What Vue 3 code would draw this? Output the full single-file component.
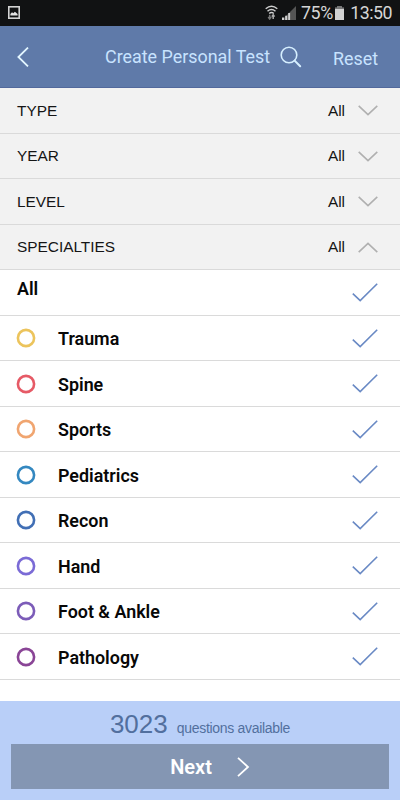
<script setup>
const filters = [
  { name: 'TYPE', value: 'All', open: false },
  { name: 'YEAR', value: 'All', open: false },
  { name: 'LEVEL', value: 'All', open: false },
  { name: 'SPECIALTIES', value: 'All', open: true },
]
const specialties = [
  { name: 'Trauma', color: '#ecc45c' },
  { name: 'Spine', color: '#e65a66' },
  { name: 'Sports', color: '#f0a570' },
  { name: 'Pediatrics', color: '#3488c0' },
  { name: 'Recon', color: '#416fb5' },
  { name: 'Hand', color: '#7b6bd6' },
  { name: 'Foot & Ankle', color: '#7c5cb8' },
  { name: 'Pathology', color: '#8a4596' },
]
</script>

<template>
  <div class="screen">
    <div class="status">
      <svg class="picture" width="12" height="13" viewBox="0 0 12 13">
        <rect x="0.8" y="0.8" width="10.4" height="11.4" fill="none" stroke="#d4d4d4" stroke-width="1.6" />
        <path d="M2.4 9.5V8l1.6-1.7 1.3 1 1.6-1.5L9.6 8v1.5z" fill="#e4e4e4" />
      </svg>
      <svg class="wifi" width="13" height="15" viewBox="0 0 13 15" fill="none" stroke="#cfcfcf" stroke-width="1.5">
        <path d="M.7 3.7Q6.5-1.2 12.3 3.7M2.5 6.2Q6.5 2.8 10.5 6.2M4.2 8.5Q6.5 6.5 8.8 8.5" />
        <path d="M4.7 14V9.8M3.2 12l1.5 2 1.5-2" stroke="#777" />
        <path d="M8.2 14V9.8M6.8 11.6l1.4-1.8 1.4 1.8" stroke="#aaa" />
      </svg>
      <svg class="signal" width="14" height="14" viewBox="0 0 14 14">
        <path d="M0 14L14 0V14z" fill="#555" />
        <path d="M0 14v-2.5h2V14zM3.2 14V9.7h2V14zM6.2 14V7h1.9v7z" fill="#d0d0d0" />
      </svg>
      <span class="percent">75%</span>
      <svg class="battery" width="9" height="14" viewBox="0 0 9 14">
        <path d="M2.5 0h4v1.7H9V14H0V1.7h2.5z" fill="#d2d2d2" />
        <path d="M2.5 0h4v1.7H9v1.4H0V1.7h2.5z" fill="#777" />
      </svg>
      <span class="clock">13:50</span>
    </div>

    <header class="header">
      <svg class="back" width="12" height="20" viewBox="0 0 12 20">
        <path d="M11 .6L1.4 10l9.6 9.4" fill="none" stroke="#e3f6ff" stroke-width="1.8" />
      </svg>
      <span class="title">Create Personal Test</span>
      <svg class="search" width="22" height="22" viewBox="0 0 22 22" fill="none" stroke="#d6efff">
        <circle cx="9" cy="9" r="7.8" stroke-width="1.6" />
        <path d="M14.6 14.6l5.6 5.7" stroke-width="2" stroke-linecap="round" />
      </svg>
      <span class="reset">Reset</span>
    </header>

    <div v-for="f in filters" :key="f.name" class="row filter">
      <span class="filter-name">{{ f.name }}</span>
      <span class="filter-value">{{ f.value }}</span>
      <svg :class="['chevron', { open: f.open }]" width="20" height="11" viewBox="0 0 20 11">
        <path d="M.7.9L10 9.7 19.3.9" fill="none" stroke="#b0b0b0" stroke-width="1.6" />
      </svg>
    </div>

    <div class="row item all">
      <span class="all-name">All</span>
      <svg class="check" width="26" height="19" viewBox="0 0 26 19">
        <path d="M.8 10.6l7.4 7L25.2.8" fill="none" stroke="#6989c4" stroke-width="1.6" />
      </svg>
    </div>
    <div v-for="s in specialties" :key="s.name" class="row item specialty">
      <svg class="ring" width="20" height="20" viewBox="0 0 20 20">
        <circle cx="10" cy="10" r="8.1" fill="none" :stroke="s.color" stroke-width="2.6" />
      </svg>
      <span class="name">{{ s.name }}</span>
      <svg class="check" width="26" height="19" viewBox="0 0 26 19">
        <path d="M.8 10.6l7.4 7L25.2.8" fill="none" stroke="#6989c4" stroke-width="1.6" />
      </svg>
    </div>

    <footer class="footer">
      <div class="count">
        <span class="number">3023</span>
        <span class="available">questions available</span>
      </div>
      <div class="next">
        <span>Next</span>
        <svg width="13" height="20" viewBox="0 0 13 20">
          <path d="M1 .8l10 9.2L1 19.2" fill="none" stroke="#fff" stroke-width="1.8" />
        </svg>
      </div>
    </footer>
  </div>
</template>

<style>
body {
  margin: 0;
  background: #fff;
}
</style>

<style scoped>
.screen {
  width: 400px;
  height: 800px;
  display: flex;
  flex-direction: column;
  overflow: hidden;
  background: #fff;
  font-family: Roboto, sans-serif;
  white-space: nowrap;
}
svg {
  display: block;
  flex: none;
}
.status {
  height: 26px;
  flex: none;
  box-sizing: border-box;
  padding: 0 8px;
  display: flex;
  align-items: center;
  background: #111213;
  color: #d6d6d6;
  line-height: 26px;
}
.picture {
  margin-top: -2px;
}
.wifi {
  margin-left: 245px;
  margin-top: -1px;
}
.signal {
  margin-left: 4px;
}
.percent {
  width: 34px;
  margin-left: 5px;
  font-size: 17.8px;
  letter-spacing: -0.4px;
}
.battery {
  margin-left: 1px;
}
.clock {
  margin-left: 6px;
  font-size: 17.8px;
  letter-spacing: -0.5px;
}
.header {
  height: 62px;
  flex: none;
  box-sizing: border-box;
  padding: 0 17px;
  border-bottom: 1px solid #52699c;
  display: flex;
  align-items: center;
  background: #5f7aa9;
  color: #c8e3ff;
  font-size: 17.9px;
}
.title {
  width: 165px;
  margin-left: 76px;
}
.search {
  margin-left: 10px;
}
.reset {
  margin-left: 31px;
  padding-top: 3px;
}
.row {
  height: 45.5px;
  flex: none;
  box-sizing: border-box;
  padding: 0 22px 0 17px;
  border-bottom: 1px solid #dadada;
  display: flex;
  align-items: center;
}
.filter {
  padding-top: 1px;
  background: #f2f2f2;
  color: #151515;
  font-family: "Liberation Sans", sans-serif;
  font-size: 15.4px;
}
.filter-name {
  flex: 1;
}
.filter-value {
  margin-right: 13px;
}
.chevron.open {
  transform: rotate(180deg);
}
.item {
  color: #080808;
  font-size: 17.9px;
  font-weight: 600;
}
.specialty {
  padding-top: 1px;
}
.all-name {
  padding-bottom: 7px;
}
.ring {
  margin-left: -1px;
}
.name {
  margin-left: 22px;
  padding-top: 1px;
}
.check {
  margin-left: auto;
}
.footer {
  height: 99px;
  flex: none;
  margin-top: auto;
  box-sizing: border-box;
  padding: 0 11px 11px;
  background: #b9cff8;
  color: #526f9e;
  font-family: "Liberation Sans", sans-serif;
}
.count {
  height: 43px;
  display: flex;
  justify-content: center;
  align-items: baseline;
  gap: 9px;
  line-height: 46px;
}
.number {
  font-size: 26px;
}
.available {
  font-size: 14px;
  letter-spacing: -0.3px;
}
.next {
  height: 45px;
  box-sizing: border-box;
  padding: 1px 0 0 20px;
  display: flex;
  align-items: center;
  justify-content: center;
  gap: 25px;
  background: #8496b3;
  color: #fff;
  font-family: Roboto, sans-serif;
  font-size: 20px;
  font-weight: 600;
}
</style>
